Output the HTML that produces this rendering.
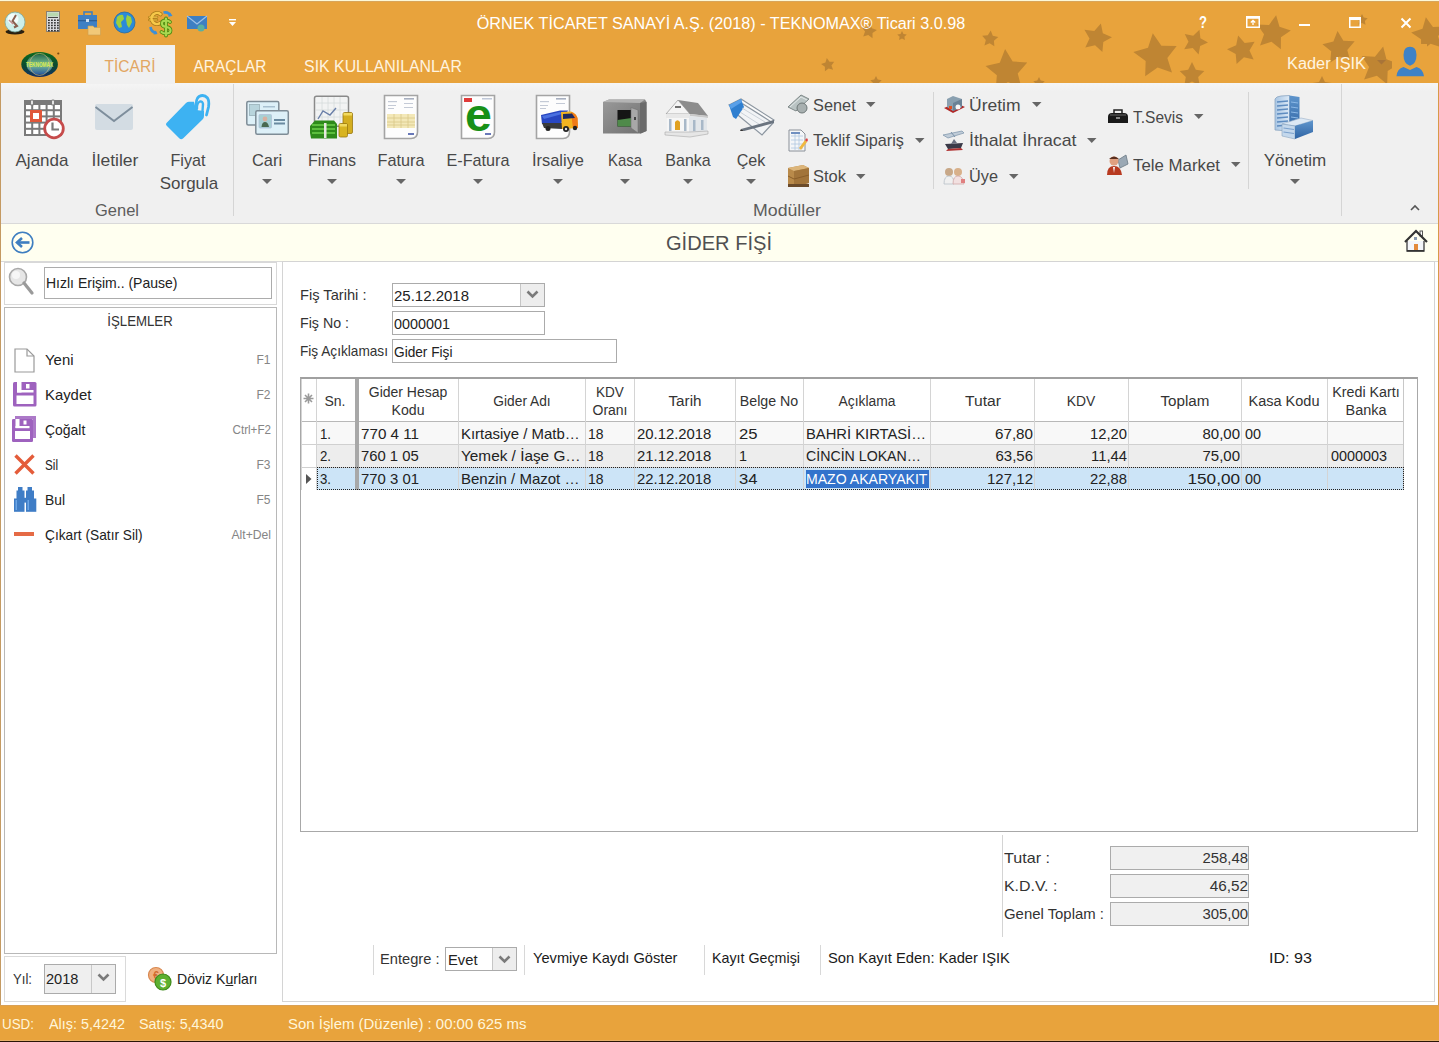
<!DOCTYPE html>
<html><head><meta charset="utf-8">
<style>
*{margin:0;padding:0;box-sizing:border-box}
html,body{width:1439px;height:1042px;overflow:hidden;background:#E8A33C;font-family:"Liberation Sans",sans-serif;position:relative}
.a{position:absolute}
.t{position:absolute;white-space:nowrap;line-height:1}
svg{overflow:visible}
</style></head><body>

<div class="a" style="left:0px;top:0px;width:1439px;height:83px;background:#E8A33C"></div>
<div class="a" style="left:0px;top:0px;width:1439px;height:1px;background:#FDF8D6"></div>
<div class="a" style="left:0px;top:1px;width:1439px;height:1px;background:#D8A55A"></div>
<svg class="a" style="left:0;top:0" width="1439" height="83" viewBox="0 0 1439 83"><polygon transform="translate(869,31) rotate(10) scale(8)" points="0.000,-1.000 0.294,-0.405 0.951,-0.309 0.476,0.155 0.588,0.809 0.000,0.500 -0.588,0.809 -0.476,0.155 -0.951,-0.309 -0.294,-0.405" fill="#BF8533"/><polygon transform="translate(902,36) rotate(0) scale(5)" points="0.000,-1.000 0.294,-0.405 0.951,-0.309 0.476,0.155 0.588,0.809 0.000,0.500 -0.588,0.809 -0.476,0.155 -0.951,-0.309 -0.294,-0.405" fill="#BF8533"/><polygon transform="translate(828,65) rotate(-10) scale(7)" points="0.000,-1.000 0.294,-0.405 0.951,-0.309 0.476,0.155 0.588,0.809 0.000,0.500 -0.588,0.809 -0.476,0.155 -0.951,-0.309 -0.294,-0.405" fill="#BF8533"/><polygon transform="translate(990,39) rotate(5) scale(8.5)" points="0.000,-1.000 0.294,-0.405 0.951,-0.309 0.476,0.155 0.588,0.809 0.000,0.500 -0.588,0.809 -0.476,0.155 -0.951,-0.309 -0.294,-0.405" fill="#BF8533"/><polygon transform="translate(1007,71) rotate(-5) scale(22)" points="0.000,-1.000 0.294,-0.405 0.951,-0.309 0.476,0.155 0.588,0.809 0.000,0.500 -0.588,0.809 -0.476,0.155 -0.951,-0.309 -0.294,-0.405" fill="#BF8533"/><polygon transform="translate(1097,38) rotate(15) scale(15)" points="0.000,-1.000 0.294,-0.405 0.951,-0.309 0.476,0.155 0.588,0.809 0.000,0.500 -0.588,0.809 -0.476,0.155 -0.951,-0.309 -0.294,-0.405" fill="#BF8533"/><polygon transform="translate(1156,56) rotate(-8) scale(23)" points="0.000,-1.000 0.294,-0.405 0.951,-0.309 0.476,0.155 0.588,0.809 0.000,0.500 -0.588,0.809 -0.476,0.155 -0.951,-0.309 -0.294,-0.405" fill="#BF8533"/><polygon transform="translate(1195,42) rotate(20) scale(13)" points="0.000,-1.000 0.294,-0.405 0.951,-0.309 0.476,0.155 0.588,0.809 0.000,0.500 -0.588,0.809 -0.476,0.155 -0.951,-0.309 -0.294,-0.405" fill="#BF8533"/><polygon transform="translate(1192,75) rotate(0) scale(13)" points="0.000,-1.000 0.294,-0.405 0.951,-0.309 0.476,0.155 0.588,0.809 0.000,0.500 -0.588,0.809 -0.476,0.155 -0.951,-0.309 -0.294,-0.405" fill="#BF8533"/><polygon transform="translate(876,82) rotate(0) scale(6)" points="0.000,-1.000 0.294,-0.405 0.951,-0.309 0.476,0.155 0.588,0.809 0.000,0.500 -0.588,0.809 -0.476,0.155 -0.951,-0.309 -0.294,-0.405" fill="#BF8533"/><polygon transform="translate(1039,83) rotate(0) scale(6)" points="0.000,-1.000 0.294,-0.405 0.951,-0.309 0.476,0.155 0.588,0.809 0.000,0.500 -0.588,0.809 -0.476,0.155 -0.951,-0.309 -0.294,-0.405" fill="#BF8533"/><polygon transform="translate(1242,50) rotate(-15) scale(15)" points="0.000,-1.000 0.294,-0.405 0.951,-0.309 0.476,0.155 0.588,0.809 0.000,0.500 -0.588,0.809 -0.476,0.155 -0.951,-0.309 -0.294,-0.405" fill="#BF8533"/><polygon transform="translate(1273,33) rotate(10) scale(18)" points="0.000,-1.000 0.294,-0.405 0.951,-0.309 0.476,0.155 0.588,0.809 0.000,0.500 -0.588,0.809 -0.476,0.155 -0.951,-0.309 -0.294,-0.405" fill="#BF8533"/><polygon transform="translate(1339,48) rotate(-5) scale(17)" points="0.000,-1.000 0.294,-0.405 0.951,-0.309 0.476,0.155 0.588,0.809 0.000,0.500 -0.588,0.809 -0.476,0.155 -0.951,-0.309 -0.294,-0.405" fill="#BF8533"/><polygon transform="translate(1362,20) rotate(0) scale(6)" points="0.000,-1.000 0.294,-0.405 0.951,-0.309 0.476,0.155 0.588,0.809 0.000,0.500 -0.588,0.809 -0.476,0.155 -0.951,-0.309 -0.294,-0.405" fill="#BF8533"/><polygon transform="translate(1379,66) rotate(12) scale(20)" points="0.000,-1.000 0.294,-0.405 0.951,-0.309 0.476,0.155 0.588,0.809 0.000,0.500 -0.588,0.809 -0.476,0.155 -0.951,-0.309 -0.294,-0.405" fill="#BF8533"/><polygon transform="translate(1429,35) rotate(-10) scale(18)" points="0.000,-1.000 0.294,-0.405 0.951,-0.309 0.476,0.155 0.588,0.809 0.000,0.500 -0.588,0.809 -0.476,0.155 -0.951,-0.309 -0.294,-0.405" fill="#BF8533"/><polygon transform="translate(1322,86) rotate(0) scale(10)" points="0.000,-1.000 0.294,-0.405 0.951,-0.309 0.476,0.155 0.588,0.809 0.000,0.500 -0.588,0.809 -0.476,0.155 -0.951,-0.309 -0.294,-0.405" fill="#BF8533"/></svg>
<svg class="a" style="left:3px;top:10px" width="24" height="25" viewBox="0 0 24 25">
<ellipse cx="12" cy="21.8" rx="9.5" ry="2.6" fill="#2a2010"/>
<circle cx="12" cy="12" r="10" fill="#CDEFEA" stroke="#7AA8A0" stroke-width="0.8"/>
<circle cx="10" cy="9" r="5.5" fill="#F2FCFA"/>
<path d="M13 5 L9.5 11 L14 16 L11 17.5" stroke="#8A6050" stroke-width="2" fill="none"/>
<path d="M6 10 L10 14" stroke="#C09090" stroke-width="1.5"/>
</svg>
<svg class="a" style="left:46px;top:11px" width="14" height="21" viewBox="0 0 14 21">
<rect x="0.5" y="0.5" width="13" height="20" fill="#DCDCE0" stroke="#8A8070" stroke-width="1"/>
<rect x="1.5" y="1.5" width="11" height="4" fill="#B8D8B0"/>
<rect x="2" y="6" width="10" height="1" fill="#444"/>
<rect x="2" y="8.5" width="1.8" height="1.5" fill="#333"/><rect x="2" y="11.1" width="1.8" height="1.5" fill="#333"/><rect x="2" y="13.7" width="1.8" height="1.5" fill="#333"/><rect x="2" y="16.3" width="1.8" height="1.5" fill="#333"/><rect x="2" y="18.9" width="1.8" height="1.5" fill="#333"/><rect x="5" y="8.5" width="1.8" height="1.5" fill="#333"/><rect x="5" y="11.1" width="1.8" height="1.5" fill="#333"/><rect x="5" y="13.7" width="1.8" height="1.5" fill="#333"/><rect x="5" y="16.3" width="1.8" height="1.5" fill="#333"/><rect x="5" y="18.9" width="1.8" height="1.5" fill="#333"/><rect x="8" y="8.5" width="1.8" height="1.5" fill="#333"/><rect x="8" y="11.1" width="1.8" height="1.5" fill="#333"/><rect x="8" y="13.7" width="1.8" height="1.5" fill="#333"/><rect x="8" y="16.3" width="1.8" height="1.5" fill="#333"/><rect x="8" y="18.9" width="1.8" height="1.5" fill="#333"/><rect x="11" y="8.5" width="1.8" height="1.5" fill="#333"/><rect x="11" y="11.1" width="1.8" height="1.5" fill="#333"/><rect x="11" y="13.7" width="1.8" height="1.5" fill="#333"/><rect x="11" y="16.3" width="1.8" height="1.5" fill="#333"/><rect x="11" y="18.9" width="1.8" height="1.5" fill="#333"/>
</svg>
<svg class="a" style="left:77px;top:11px" width="24" height="24" viewBox="0 0 24 24">
<rect x="7" y="1" width="8" height="4" fill="none" stroke="#3f7fbf" stroke-width="1.6"/>
<rect x="1" y="4" width="19" height="14" fill="#3f80c4"/>
<rect x="1" y="9" width="19" height="1.3" fill="#2d5f96"/>
<rect x="9" y="8" width="3" height="3" fill="#cfe0f0"/>
<path d="M11 15 h5 l1.5 1.5 h6 v7.5 h-12.5z" fill="#f1c878" stroke="#c9a050" stroke-width="0.6"/>
</svg>
<svg class="a" style="left:113px;top:11px" width="23" height="23" viewBox="0 0 23 23">
<circle cx="11.5" cy="11.5" r="10.5" fill="#2c8ad8" stroke="#1f6aa8" stroke-width="0.8"/>
<path d="M4 6 q3 -3 6 -2 l1 4 l-3 3 l1 5 l-3 1 l-3 -5z" fill="#9ccf3f"/>
<path d="M14 4 l4 2 l1 5 l-3 6 l-2 -3 l-1 -6z" fill="#9ccf3f"/>
</svg>
<svg class="a" style="left:148px;top:10px" width="26" height="25" viewBox="0 0 26 25">
<path d="M15.5 2.5 Q21 1.5 22.5 6" stroke="#3D8FD8" stroke-width="2.6" fill="none"/><path d="M20 6.5 L24.5 6 L22 2.5z" fill="#3D8FD8"/>
<path d="M2.5 17 Q3 22 8.5 23" stroke="#3D8FD8" stroke-width="2.6" fill="none"/><path d="M7.5 20.5 L9.5 24 L5.5 24.5z" fill="#3D8FD8"/>
<g fill="none" stroke-linecap="round">
<path d="M12.5 4.2 A5.5 5.5 0 1 0 12.5 12.8" stroke="#A87A18" stroke-width="4.2"/>
<path d="M1.5 7.2 H9 M1.5 10 H9" stroke="#A87A18" stroke-width="2.6"/>
<path d="M12.5 4.2 A5.5 5.5 0 1 0 12.5 12.8" stroke="#F6C84A" stroke-width="2.6"/>
<path d="M1.5 7.2 H9 M1.5 10 H9" stroke="#F6C84A" stroke-width="1.2"/>
<path d="M22 12 Q20.5 10.5 18 10.5 Q14 10.5 14 13.5 Q14 16.5 18 17 Q22.5 17.5 22.5 20.5 Q22.5 23.5 18 23.5 Q15 23.5 13.5 22 M18 8.5 V25.5" stroke="#4F8A10" stroke-width="3.8"/>
<path d="M22 12 Q20.5 10.5 18 10.5 Q14 10.5 14 13.5 Q14 16.5 18 17 Q22.5 17.5 22.5 20.5 Q22.5 23.5 18 23.5 Q15 23.5 13.5 22 M18 8.5 V25.5" stroke="#A8D850" stroke-width="2.2"/>
</g>
</svg>
<svg class="a" style="left:186px;top:15px" width="24" height="18" viewBox="0 0 24 18">
<rect x="1" y="1" width="20" height="13" fill="#3d7fc3"/>
<path d="M1 1 L11 9 L21 1" stroke="#9ec2e6" stroke-width="1.2" fill="none"/>
<circle cx="15" cy="13" r="3.5" fill="#5ab0a0"/>
</svg>
<svg class="a" style="left:228px;top:18px" width="9" height="10" viewBox="0 0 9 10"><rect x="1" y="1" width="7" height="1.4" fill="#fff"/><path d="M1 4 L8 4 L4.5 8z" fill="#fff"/></svg>
<div class="t" style="top:15.10px;font-size:16.3px;color:#FFFFFF;left:220.5px;width:1000px;text-align:center;transform-origin:500px 0;transform:scaleX(0.9943);">ÖRNEK TİCARET SANAYİ A.Ş. (2018) - TEKNOMAX® Ticari 3.0.98</div>
<div class="t" style="top:14.75px;font-size:16px;color:#fff;left:702.5px;width:1000px;text-align:center;transform-origin:500px 0;transform:scaleX(0.8185);font-weight:bold">?</div>
<svg class="a" style="left:1246px;top:16px" width="14" height="12" viewBox="0 0 14 12"><rect x="0.75" y="0.75" width="12.5" height="10.5" fill="none" stroke="#fff" stroke-width="1.5"/><rect x="0.75" y="0.75" width="12.5" height="2" fill="#fff"/><path d="M7 9 V4.5 M4.8 6.5 L7 4.3 L9.2 6.5" stroke="#fff" stroke-width="1.3" fill="none"/></svg>
<div class="a" style="left:1299px;top:24px;width:11px;height:2px;background:#fff"></div>
<svg class="a" style="left:1349px;top:17px" width="12" height="11" viewBox="0 0 12 11"><rect x="0.75" y="0.75" width="10.5" height="9.5" fill="none" stroke="#fff" stroke-width="1.5"/><rect x="0.75" y="0.75" width="10.5" height="2.3" fill="#fff"/></svg>
<svg class="a" style="left:1400px;top:17px" width="12" height="12" viewBox="0 0 12 12"><path d="M1.5 1.5 L10.5 10.5 M10.5 1.5 L1.5 10.5" stroke="#fff" stroke-width="2"/></svg>
<div class="a" style="left:86px;top:45px;width:89px;height:38px;background:#F0F0F0"></div>
<div class="t" style="top:59.35px;font-size:16.8px;color:#E2A662;left:-370px;width:1000px;text-align:center;transform-origin:500px 0;transform:scaleX(0.9261);">TİCARİ</div>
<div class="t" style="top:59.35px;font-size:16.8px;color:#FFF4E0;left:-270px;width:1000px;text-align:center;transform-origin:500px 0;transform:scaleX(0.9199);">ARAÇLAR</div>
<div class="t" style="top:59.35px;font-size:16.8px;color:#FFF4E0;left:-117.5px;width:1000px;text-align:center;transform-origin:500px 0;transform:scaleX(0.9453);">SIK KULLANILANLAR</div>
<svg class="a" style="left:19px;top:50px" width="42" height="30" viewBox="0 0 42 30">
<defs><linearGradient id="lg1" x1="0" y1="0" x2="0" y2="1"><stop offset="0" stop-color="#0E6A1E"/><stop offset="0.55" stop-color="#0A4A30"/><stop offset="1" stop-color="#14306A"/></linearGradient>
<linearGradient id="lg2" x1="0" y1="0" x2="0" y2="1"><stop offset="0" stop-color="#2A6A50"/><stop offset="0.5" stop-color="#7ABF90"/><stop offset="1" stop-color="#2A5AA0"/></linearGradient></defs>
<ellipse cx="20.6" cy="14.4" rx="18.3" ry="12.5" fill="url(#lg1)"/>
<ellipse cx="20.6" cy="14.4" rx="13" ry="10" fill="url(#lg2)"/>
<ellipse cx="20.6" cy="14.4" rx="10" ry="11" fill="none" stroke="#C8B880" stroke-width="0.7"/>
<text x="20.6" y="17.2" text-anchor="middle" font-family="Liberation Sans" font-weight="bold" font-size="7" fill="#D8E850" textLength="27" lengthAdjust="spacingAndGlyphs">TEKNOMAX</text>
<circle cx="39.3" cy="3.5" r="1.1" fill="#7A4A10"/>
</svg>
<div class="t" style="top:55.95px;font-size:15.6px;color:#FFF5E0;left:1287px;transform-origin:0 0;transform:scaleX(1.0471);">Kader IŞIK</div>
<svg class="a" style="left:1377px;top:60px" width="10" height="6" viewBox="0 0 10 6"><path d="M0 0 L9 0 L4.5 4.5z" fill="#A87438"/></svg>
<div class="a" style="left:1392px;top:44px;width:35px;height:37px;background:#E8A33C"></div>
<svg class="a" style="left:1394px;top:45px" width="33" height="33" viewBox="0 0 33 33">
<path d="M9.5 10 Q9.5 1.8 16 1.8 Q22.5 1.8 22.5 10 Q22.5 19 16 20.8 Q9.5 19 9.5 10z" fill="#3F82C6"/>
<path d="M2.5 31.2 Q3 24 9.5 22 L16 25 L22.5 22 Q29 24 30 31.2z" fill="#3F82C6"/>
</svg>
<div class="a" style="left:1px;top:83px;width:1437px;height:140px;background:#F0F0F0"></div>
<div class="a" style="left:1px;top:83px;width:1437px;height:9px;background:linear-gradient(#F5F5F5,#F0F0F0)"></div>
<div class="a" style="left:86px;top:83px;width:89px;height:1px;background:#F0F0F0"></div>
<div class="a" style="left:233px;top:84px;width:1px;height:132px;background:#D5D5D5"></div>
<div class="a" style="left:933px;top:92px;width:1px;height:97px;background:#D5D5D5"></div>
<div class="a" style="left:1248px;top:92px;width:1px;height:97px;background:#D5D5D5"></div>
<div class="a" style="left:1341px;top:84px;width:1px;height:132px;background:#D5D5D5"></div>
<div class="t" style="top:152.15px;font-size:16.2px;color:#484848;left:-458.0px;width:1000px;text-align:center;transform-origin:500px 0;transform:scaleX(1.0506);">Ajanda</div>
<div class="t" style="top:152.15px;font-size:16.2px;color:#484848;left:-385.4px;width:1000px;text-align:center;transform-origin:500px 0;transform:scaleX(1.0830);">İletiler</div>
<div class="t" style="top:152.15px;font-size:16.2px;color:#484848;left:-312.0px;width:1000px;text-align:center;transform-origin:500px 0;transform:scaleX(0.9970);">Fiyat</div>
<div class="t" style="top:152.15px;font-size:16.2px;color:#484848;left:-232.89999999999998px;width:1000px;text-align:center;transform-origin:500px 0;transform:scaleX(1.0167);">Cari</div>
<div class="t" style="top:152.15px;font-size:16.2px;color:#484848;left:-168.5px;width:1000px;text-align:center;transform-origin:500px 0;transform:scaleX(0.9871);">Finans</div>
<div class="t" style="top:152.15px;font-size:16.2px;color:#484848;left:-99.0px;width:1000px;text-align:center;transform-origin:500px 0;transform:scaleX(1.0038);">Fatura</div>
<div class="t" style="top:152.15px;font-size:16.2px;color:#484848;left:-22.0px;width:1000px;text-align:center;transform-origin:500px 0;transform:scaleX(0.9996);">E-Fatura</div>
<div class="t" style="top:152.15px;font-size:16.2px;color:#484848;left:57.5px;width:1000px;text-align:center;transform-origin:500px 0;transform:scaleX(1.0134);">İrsaliye</div>
<div class="t" style="top:152.15px;font-size:16.2px;color:#484848;left:124.5px;width:1000px;text-align:center;transform-origin:500px 0;transform:scaleX(0.9208);">Kasa</div>
<div class="t" style="top:152.15px;font-size:16.2px;color:#484848;left:187.75px;width:1000px;text-align:center;transform-origin:500px 0;transform:scaleX(0.9905);">Banka</div>
<div class="t" style="top:152.15px;font-size:16.2px;color:#484848;left:250.54999999999995px;width:1000px;text-align:center;transform-origin:500px 0;transform:scaleX(0.9962);">Çek</div>
<div class="t" style="top:152.15px;font-size:16.2px;color:#484848;left:795.1500000000001px;width:1000px;text-align:center;transform-origin:500px 0;transform:scaleX(1.0516);">Yönetim</div>
<div class="t" style="top:175.15px;font-size:16.2px;color:#484848;left:-311.25px;width:1000px;text-align:center;transform-origin:500px 0;transform:scaleX(1.0476);">Sorgula</div>
<div class="t" style="top:202.15px;font-size:16.2px;color:#5C5C5C;left:-383.5px;width:1000px;text-align:center;transform-origin:500px 0;transform:scaleX(1.0178);">Genel</div>
<div class="t" style="top:202.15px;font-size:16.2px;color:#5C5C5C;left:287.1px;width:1000px;text-align:center;transform-origin:500px 0;transform:scaleX(1.0945);">Modüller</div>
<svg class="a" style="left:262.0px;top:179px" width="10" height="5" viewBox="0 0 10 5"><path d="M0 0 L10 0 L5.0 5z" fill="#666666"/></svg>
<svg class="a" style="left:326.5px;top:179px" width="10" height="5" viewBox="0 0 10 5"><path d="M0 0 L10 0 L5.0 5z" fill="#666666"/></svg>
<svg class="a" style="left:396.0px;top:179px" width="10" height="5" viewBox="0 0 10 5"><path d="M0 0 L10 0 L5.0 5z" fill="#666666"/></svg>
<svg class="a" style="left:473.0px;top:179px" width="10" height="5" viewBox="0 0 10 5"><path d="M0 0 L10 0 L5.0 5z" fill="#666666"/></svg>
<svg class="a" style="left:552.5px;top:179px" width="10" height="5" viewBox="0 0 10 5"><path d="M0 0 L10 0 L5.0 5z" fill="#666666"/></svg>
<svg class="a" style="left:619.5px;top:179px" width="10" height="5" viewBox="0 0 10 5"><path d="M0 0 L10 0 L5.0 5z" fill="#666666"/></svg>
<svg class="a" style="left:683.0px;top:179px" width="10" height="5" viewBox="0 0 10 5"><path d="M0 0 L10 0 L5.0 5z" fill="#666666"/></svg>
<svg class="a" style="left:745.5px;top:179px" width="10" height="5" viewBox="0 0 10 5"><path d="M0 0 L10 0 L5.0 5z" fill="#666666"/></svg>
<svg class="a" style="left:1290.0px;top:179px" width="10" height="5" viewBox="0 0 10 5"><path d="M0 0 L10 0 L5.0 5z" fill="#666666"/></svg>
<div class="t" style="top:97.15px;font-size:16.2px;color:#484848;left:813px;transform-origin:0 0;transform:scaleX(1.0086);">Senet</div>
<svg class="a" style="left:866.25px;top:102.3px" width="9.5" height="5" viewBox="0 0 9.5 5"><path d="M0 0 L9.5 0 L4.75 5z" fill="#666666"/></svg>
<div class="t" style="top:132.15px;font-size:16.2px;color:#484848;left:813px;transform-origin:0 0;transform:scaleX(1.0008);">Teklif Sipariş</div>
<svg class="a" style="left:914.75px;top:137.8px" width="9.5" height="5" viewBox="0 0 9.5 5"><path d="M0 0 L9.5 0 L4.75 5z" fill="#666666"/></svg>
<div class="t" style="top:168.15px;font-size:16.2px;color:#484848;left:813px;transform-origin:0 0;transform:scaleX(1.0180);">Stok</div>
<svg class="a" style="left:856.25px;top:173.9px" width="9.5" height="5" viewBox="0 0 9.5 5"><path d="M0 0 L9.5 0 L4.75 5z" fill="#666666"/></svg>
<div class="t" style="top:97.15px;font-size:16.2px;color:#484848;left:969px;transform-origin:0 0;transform:scaleX(1.0818);">Üretim</div>
<svg class="a" style="left:1031.75px;top:102.3px" width="9.5" height="5" viewBox="0 0 9.5 5"><path d="M0 0 L9.5 0 L4.75 5z" fill="#666666"/></svg>
<div class="t" style="top:132.15px;font-size:16.2px;color:#484848;left:969px;transform-origin:0 0;transform:scaleX(1.0952);">İthalat İhracat</div>
<svg class="a" style="left:1086.75px;top:137.8px" width="9.5" height="5" viewBox="0 0 9.5 5"><path d="M0 0 L9.5 0 L4.75 5z" fill="#666666"/></svg>
<div class="t" style="top:168.15px;font-size:16.2px;color:#484848;left:969px;transform-origin:0 0;transform:scaleX(1.0066);">Üye</div>
<svg class="a" style="left:1008.75px;top:173.9px" width="9.5" height="5" viewBox="0 0 9.5 5"><path d="M0 0 L9.5 0 L4.75 5z" fill="#666666"/></svg>
<div class="t" style="top:109.15px;font-size:16.2px;color:#484848;left:1133px;transform-origin:0 0;transform:scaleX(0.9576);">T.Sevis</div>
<svg class="a" style="left:1194.25px;top:114.3px" width="9.5" height="5" viewBox="0 0 9.5 5"><path d="M0 0 L9.5 0 L4.75 5z" fill="#666666"/></svg>
<div class="t" style="top:157.15px;font-size:16.2px;color:#484848;left:1133px;transform-origin:0 0;transform:scaleX(1.0390);">Tele Market</div>
<svg class="a" style="left:1230.75px;top:162.1px" width="9.5" height="5" viewBox="0 0 9.5 5"><path d="M0 0 L9.5 0 L4.75 5z" fill="#666666"/></svg>
<svg class="a" style="left:1410px;top:205px" width="10" height="6" viewBox="0 0 10 6"><path d="M1 5 L5 1 L9 5" stroke="#555" stroke-width="1.6" fill="none"/></svg>
<svg class="a" style="left:23.5px;top:97px" width="44" height="44" viewBox="0 0 44 44">
<rect x="0" y="3" width="38" height="34" fill="#FFFFFF"/>
<rect x="0" y="3" width="38" height="5" fill="#7A7A7A"/>
<rect x="0.0" y="6" width="2" height="31" fill="#7A7A7A"/><rect x="7.2" y="6" width="2" height="31" fill="#7A7A7A"/><rect x="14.4" y="6" width="2" height="31" fill="#7A7A7A"/><rect x="21.6" y="6" width="2" height="31" fill="#7A7A7A"/><rect x="28.8" y="6" width="2" height="31" fill="#7A7A7A"/><rect x="36.0" y="6" width="2" height="31" fill="#7A7A7A"/><rect x="0" y="6.0" width="38" height="2" fill="#7A7A7A"/><rect x="0" y="12.2" width="38" height="2" fill="#7A7A7A"/><rect x="0" y="18.4" width="38" height="2" fill="#7A7A7A"/><rect x="0" y="24.6" width="38" height="2" fill="#7A7A7A"/><rect x="0" y="30.8" width="38" height="2" fill="#7A7A7A"/><rect x="0" y="37.0" width="38" height="2" fill="#7A7A7A"/>
<rect x="6.5" y="3" width="3" height="5" rx="1" fill="#F0F0F0" stroke="#7A7A7A" stroke-width="1.2"/>
<rect x="27.5" y="3" width="3" height="5" rx="1" fill="#F0F0F0" stroke="#7A7A7A" stroke-width="1.2"/>
<rect x="7.5" y="14.5" width="9" height="9" fill="#fff" stroke="#E0573A" stroke-width="3"/>
<circle cx="30" cy="31.5" r="9.3" fill="#fff" stroke="#C64B4B" stroke-width="2.8"/>
<path d="M28.5 25.5 V32.5 H35" stroke="#7A7A7A" stroke-width="2.2" fill="none"/>
</svg>
<svg class="a" style="left:95px;top:104px" width="39" height="27" viewBox="0 0 39 27">
<rect x="0" y="0" width="38" height="26" rx="2" fill="#D3DCE3"/>
<path d="M0.5 3 L19 17 L37.5 3" stroke="#7E8E9C" stroke-width="2" fill="none"/>
</svg>
<svg class="a" style="left:160px;top:90px" width="56" height="54" viewBox="0 0 56 54">
<path d="M6.5 33 L26 13 Q27.5 11.8 29 11.8 L34 11.8 L36 20 L44 21 L44 26 Q44 28 42.5 29.5 L23 48.5 Q21.2 50 19.5 48.5 L6.5 35.5 Q5.3 34.2 6.5 33z" fill="#3DB2F2"/>
<path d="M36.5 20 Q35 9 39 6.5 Q44 4 47.5 8 Q49.5 11 48.5 17 L46.5 25" stroke="#3DB2F2" stroke-width="2.8" fill="none" stroke-linecap="round"/>
<path d="M37 19 Q36.5 13 40 11.5 Q42.5 11 43 14 L42.5 21" stroke="#3DB2F2" stroke-width="2.4" fill="none"/>
</svg>
<svg class="a" style="left:245px;top:100px" width="46" height="37" viewBox="0 0 46 37">
<rect x="1.8" y="1.5" width="32" height="23.5" rx="1.5" fill="#DDF0F8" stroke="#7E8C96" stroke-width="1.5"/>
<rect x="4.5" y="4.5" width="10" height="11" fill="#B8D4DC" stroke="#98B0B8" stroke-width="0.8"/>
<rect x="18" y="6" width="12" height="1.5" fill="#A8C0D0"/>
<rect x="10.8" y="10.8" width="32.5" height="23.5" rx="1.5" fill="#DDF0F8" stroke="#7E8C96" stroke-width="1.5"/>
<rect x="14" y="14.5" width="12.5" height="13.5" rx="1" fill="#A8D0D4" stroke="#B0C0D8" stroke-width="0.8"/>
<circle cx="20" cy="19" r="2.4" fill="#D8B0A0"/>
<path d="M16.5 27 Q17 22 20 22 Q23 22 24 27z" fill="#4A6A50"/>
<rect x="29" y="19" width="11" height="2" fill="#6A8AA0"/><rect x="29" y="22.5" width="11" height="2" fill="#6A8AA0"/>
</svg>
<svg class="a" style="left:308px;top:95px" width="47" height="45" viewBox="0 0 47 45">
<rect x="6.5" y="1.2" width="34" height="30" rx="2" fill="#F2F3F3" stroke="#8A8A8A" stroke-width="1.5"/>
<g stroke="#D6DADA" stroke-width="0.8"><path d="M8 8H40M8 15H40M8 22H40M14 2V31M20 2V31M26 2V31M32 2V31"/></g>
<path d="M10 24 L15 16 L22 20 L28 13" stroke="#6A7FA8" stroke-width="1.4" fill="none"/>
<path d="M2 31 L7 25.5 L26 25.5 L29 29 L29 43.5 L3 43.5 L2 38z" fill="#2E8A1A"/>
<path d="M4 30 H27 M4 34 H27 M4 38 H27" stroke="#6CD04A" stroke-width="1.4"/>
<rect x="16" y="28" width="2.5" height="15" fill="#E8E8E0"/>
<rect x="35" y="17.5" width="9.5" height="21" rx="1.5" fill="#D4AE20" stroke="#9A7A10" stroke-width="0.8"/>
<rect x="35.5" y="18" width="8.5" height="2.5" fill="#F2DA60"/>
<rect x="31" y="28.5" width="8.5" height="13.5" rx="1.5" fill="#D8B420" stroke="#9A7A10" stroke-width="0.8"/>
<rect x="31.5" y="29" width="7.5" height="2.5" fill="#F2DA60"/>
</svg>
<svg class="a" style="left:383px;top:94px" width="37" height="46" viewBox="0 0 37 46">
<path d="M1.5 1.5 H34.5 V38 Q34.5 44.5 28 44.5 H1.5z" fill="#fdfdfd" stroke="#A4A4A4" stroke-width="1.6"/>
<g fill="#c4cad6"><rect x="5" y="7" width="9" height="1.2"/><rect x="21" y="4" width="10" height="1.6" fill="#a8b0c0"/><rect x="5" y="11" width="8" height="1"/><rect x="21" y="9" width="9" height="1"/><rect x="21" y="13" width="9" height="1"/><rect x="5" y="14" width="6" height="1"/></g>
<rect x="4" y="20" width="28" height="14" fill="#F3E8B8"/>
<g stroke="#D8C888" stroke-width="0.8"><path d="M4 24H32M4 28H32M4 31H32M11 20V34M18 20V34M25 20V34"/></g>
<rect x="25" y="39" width="6" height="2" fill="#6878b8"/>
</svg>
<svg class="a" style="left:460px;top:94px" width="37" height="46" viewBox="0 0 37 46">
<path d="M1.5 1.5 H34.5 V38 Q34.5 44.5 28 44.5 H1.5z" fill="#fdfdfd" stroke="#A4A4A4" stroke-width="1.6"/>
<rect x="4" y="4" width="8" height="4" fill="#e03a3a"/>
<text x="18.5" y="37" text-anchor="middle" font-family="Liberation Sans" font-weight="bold" font-size="46" fill="#179017" transform="translate(18.5 0) scale(1.05 1) translate(-18.5 0)">e</text><rect x="22" y="4" width="10" height="1.5" fill="#c0c8d8"/>
<rect x="25" y="39" width="6" height="2" fill="#6878b8"/>
</svg>
<svg class="a" style="left:535px;top:94px" width="46" height="46" viewBox="0 0 46 46">
<path d="M1.5 1.5 H34.5 V38 Q34.5 44.5 28 44.5 H1.5z" fill="#fdfdfd" stroke="#A4A4A4" stroke-width="1.6"/>
<g fill="#c4cad6"><rect x="5" y="7" width="9" height="1.2"/><rect x="21" y="4" width="10" height="1.6" fill="#a8b0c0"/><rect x="5" y="11" width="8" height="1"/><rect x="21" y="9" width="9" height="1"/><rect x="5" y="14" width="6" height="1"/></g>
<path d="M6 21 L25 16.5 L33 16.5 L26 30 L7 30z" fill="#2846C0"/>
<path d="M7 22 L25 18 L27 20 L9 25z" fill="#4A70E0"/>
<path d="M7 29 L27 29 L27 35 L9 34z" fill="#3A3A3A"/>
<path d="M26 18 L36 17.5 Q41 19 42.5 24 L43 34 L27 35z" fill="#F2B420"/>
<path d="M36 18 Q41 19.5 42.5 24 L43 34 L38 34.5z" fill="#F07A18"/>
<path d="M28 20 L37 19.5 L40 24 L28 25z" fill="#1E2A60"/>
<circle cx="13" cy="34.5" r="2.5" fill="#222"/><circle cx="31" cy="35" r="3" fill="#222"/><circle cx="31" cy="35" r="1.2" fill="#ddd"/><circle cx="40" cy="34" r="2.2" fill="#222"/>
</svg>
<svg class="a" style="left:601px;top:98px" width="48" height="38" viewBox="0 0 48 38">
<defs><linearGradient id="kg" x1="0" y1="0" x2="1" y2="1"><stop offset="0" stop-color="#9A9A9A"/><stop offset="1" stop-color="#6E6E6E"/></linearGradient></defs>
<path d="M2 4 L8 1.5 L44 1.5 L45.5 4 L45.5 33 L40 35.5 L2 35.5z" fill="url(#kg)"/>
<path d="M2 4 L8 1.5 L44 1.5 L39 5z" fill="#B4B4B4"/>
<path d="M39 5 L45.5 4 L45.5 33 L39 35.5z" fill="#6A6A6A"/>
<rect x="16.5" y="12" width="14" height="16.5" fill="#151515"/>
<path d="M16.5 22 L30.5 20 L30.5 28.5 L16.5 28.5z" fill="#4F8A4A"/>
<path d="M30 9.5 L37 12 L37 35 L30 30z" fill="#A8A8A8" stroke="#707070" stroke-width="0.6"/>
<rect x="33" y="19" width="2" height="3" fill="#444"/>
</svg>
<svg class="a" style="left:664px;top:98px" width="46" height="41" viewBox="0 0 46 41">
<path d="M2 16 L14 2 L26 16z" fill="#F4F4F4" stroke="#A0A0A0" stroke-width="0.8"/>
<path d="M14 2 L34 5 L44 18 L26 16z" fill="#8C8C8C"/>
<path d="M26 16 L44 18 L44 20 L26 18z" fill="#C8C8C8"/>
<rect x="2" y="16" width="24" height="4" fill="#E8E8E8"/>
<path d="M3 20 H25 V34 H3z" fill="#F6F6F6"/>
<path d="M25 18 L43 20 L43 34 L25 36z" fill="#E2E6EA"/>
<g fill="#A8B8C8"><rect x="5" y="21" width="2.5" height="12"/><rect x="20" y="21" width="2.5" height="12"/><rect x="29" y="22" width="2.5" height="11"/><rect x="37" y="22" width="2.5" height="10"/></g>
<path d="M11 32 V24 Q13.5 20.5 16 24 V32z" fill="#E0A020"/>
<path d="M1 34 L26 34 L44 33 L44 36 L26 39 L1 37z" fill="#E6E6E6" stroke="#A8A8A8" stroke-width="0.6"/>
<rect x="11" y="8" width="6" height="2" fill="#707070"/>
</svg>
<svg class="a" style="left:727px;top:97px" width="49" height="41" viewBox="0 0 49 41">
<path d="M2 8 L14 2 L47 23 L34 35z" fill="#FAFAFA" stroke="#8C96A0" stroke-width="1.2"/>
<path d="M6 14 L16 7 L46 26 L35 38z" fill="#F2F4F6" stroke="#8C96A0" stroke-width="1.2"/>
<path d="M2 8 L14 2 L17 10 L9 22 L6 20z" fill="#2F7FD0"/>
<path d="M2 8 L14 2 L15 5 L4 12z" fill="#5AA0E8"/>
<g stroke="#C0C8D0" stroke-width="0.8"><path d="M15 11 L38 25 M13 15 L35 29"/></g>
<path d="M14 32 L47 23 L47 26 L17 34z" fill="#6A7480"/>
<path d="M14 32 L17 34 L13 34z" fill="#333"/>
</svg>
<svg class="a" style="left:1273px;top:94px" width="44" height="47" viewBox="0 0 44 47">
<defs><linearGradient id="yg1" x1="0" y1="0" x2="1" y2="0"><stop offset="0" stop-color="#A9C6E4"/><stop offset="1" stop-color="#DCE9F6"/></linearGradient>
<linearGradient id="yg2" x1="0" y1="0" x2="0" y2="1"><stop offset="0" stop-color="#5F95CC"/><stop offset="1" stop-color="#2F64A4"/></linearGradient></defs>
<path d="M2 5 Q3 2.5 8 2 L16.5 1.5 L16.5 37 L2 36z" fill="url(#yg1)" stroke="#8AA4C0" stroke-width="0.8"/>
<path d="M16.5 1.5 L26.5 3 L26.5 31 L16.5 37z" fill="url(#yg2)"/>
<g stroke="#5E8CC0" stroke-width="1.6"><path d="M4 8 L15 7 M4 12 L15 11 M4 16 L15 15 M4 20 L15 19 M4 24 L15 23 M4 28 L15 27 M4 32 L15 31"/></g>
<g stroke="#8CB8E6" stroke-width="1"><path d="M18 8 L25 9 M18 13 L25 14 M18 18 L25 19 M18 23 L25 24"/></g>
<path d="M9 30 L28 24 L40 26.5 L22 32z" fill="#DCE8F4" stroke="#9AB0C8" stroke-width="0.6"/>
<path d="M9 30 L22 32 L22 45 L9 42z" fill="#C4D8EC" stroke="#8AA4C0" stroke-width="0.6"/>
<path d="M22 32 L40 26.5 L40 38 L22 45z" fill="url(#yg2)"/>
<g stroke="#7AA0CC" stroke-width="1.2"><path d="M10.5 34 L21 35.5 M10.5 38 L21 39.5"/></g>
</svg>
<svg class="a" style="left:787px;top:94px" width="23" height="20" viewBox="0 0 23 20">
<path d="M1 13 L14 1 L22 5 L9 17z" fill="#b9c3c3" stroke="#7e8888" stroke-width="1"/>
<path d="M3 13 L14 3 L20 6" stroke="#e4eaea" stroke-width="1" fill="none"/>
<circle cx="15" cy="14" r="5" fill="#a8b0b0" stroke="#6e7777" stroke-width="1"/>
</svg>
<svg class="a" style="left:788px;top:129px" width="20" height="23" viewBox="0 0 20 23">
<path d="M1 1 H13 L17 5 V22 H1z" fill="#f4f6f8" stroke="#8a9098" stroke-width="1"/>
<g stroke="#b0c8e0" stroke-width="0.8"><path d="M3 7H15M3 11H15M3 15H15M3 19H15M7 4V21M11 4V21"/></g>
<rect x="3" y="3" width="9" height="2" fill="#6f8fc0"/>
<path d="M11 19 L17 11 L19 13 L13 21z" fill="#f0b840"/>
<path d="M17 11 L19 9 L20 11 L19 13z" fill="#e04040"/>
</svg>
<svg class="a" style="left:786px;top:164px" width="25" height="24" viewBox="0 0 25 24">
<path d="M2 4 L17 1 L23 4 L23 19 L8 23 L2 20z" fill="#b98a4a"/>
<path d="M2 4 L17 1 L23 4 L8 7z" fill="#dcb57a"/>
<path d="M8 7 L23 4 L23 19 L8 23z" fill="#a2743a"/>
<path d="M2 12 L8 15 L23 11" stroke="#8a5e2a" stroke-width="1" fill="none"/>
<rect x="2" y="20" width="21" height="3" fill="#6a4a2a"/>
</svg>
<svg class="a" style="left:943px;top:94px" width="23" height="21" viewBox="0 0 23 21">
<path d="M1 14 L10 19 L22 13 L13 9z" fill="#b02828"/>
<path d="M4 13 L4 5 L10 2 L19 5 L19 13 L10 17z" fill="#8aa0b0"/>
<path d="M10 9 L19 5 L19 13 L10 17z" fill="#6b8296"/>
<circle cx="15" cy="13" r="2.5" fill="#f8f8f8"/>
<rect x="6" y="12" width="3" height="3" fill="#e05020"/>
</svg>
<svg class="a" style="left:942px;top:129px" width="23" height="22" viewBox="0 0 23 22">
<path d="M1 6 L20 2 L22 4 L6 9z" fill="#c0ccd8" stroke="#7890a8" stroke-width="0.7"/>
<path d="M9 3 L13 8" stroke="#7890a8" stroke-width="1"/>
<path d="M3 15 L21 14 L19 19 L6 20z" fill="#3a3a48"/>
<path d="M6 20 L19 19 L21 21 L4 22z" fill="#b03030"/>
<path d="M9 15 L12 10 L15 14z" fill="#6a7080"/>
</svg>
<svg class="a" style="left:943px;top:167px" width="23" height="18" viewBox="0 0 23 18">
<circle cx="6" cy="5" r="4" fill="#c8a888"/><path d="M1 17 Q1 9 6 9 Q11 9 11 17z" fill="#f0f0f0" stroke="#b8c0c8" stroke-width="0.8"/>
<circle cx="15" cy="5" r="4" fill="#d8b08a"/><path d="M10 17 Q10 9 15 9 Q20 9 21 17z" fill="#f2e0e0" stroke="#d0a8a8" stroke-width="0.8"/>
<rect x="18" y="12" width="4" height="4" fill="#e08080"/>
</svg>
<svg class="a" style="left:1107px;top:108px" width="23" height="17" viewBox="0 0 23 17">
<path d="M7 5 V2 H15 V5" stroke="#222" stroke-width="1.5" fill="none"/>
<path d="M1 9 Q1 5 5 5 H17 Q21 5 21 9 V15 H1z" fill="#1a1a1a"/>
<path d="M3 7 H19" stroke="#666" stroke-width="1"/>
<rect x="9" y="9" width="4" height="2" fill="#888"/>
</svg>
<svg class="a" style="left:1106px;top:154px" width="23" height="22" viewBox="0 0 23 22">
<path d="M12 6 L20 1 L22 10 L14 14z" fill="#9aa8b4" stroke="#6a7884" stroke-width="0.8"/>
<circle cx="8" cy="7" r="4.5" fill="#e0a080"/>
<path d="M3 5 Q8 0 13 5" fill="#5a3020"/>
<path d="M1 21 Q1 12 8 12 Q15 12 16 21z" fill="#b83a20"/>
<path d="M7 13 L8 19 L9 13z" fill="#f8f8f8"/>
</svg>
<div class="a" style="left:1px;top:223px;width:1437px;height:782px;background:#FFFFFF"></div>
<div class="a" style="left:0px;top:83px;width:1px;height:922px;background:#C49A62"></div>
<div class="a" style="left:1438px;top:83px;width:1px;height:922px;background:#D89A48"></div>
<div class="a" style="left:1px;top:223px;width:1437px;height:39px;background:#FFFFF0;border-top:1px solid #D9D9D9;border-bottom:1px solid #D9D9D9"></div>
<div class="t" style="top:232.50px;font-size:20.5px;color:#505050;left:219.20000000000005px;width:1000px;text-align:center;transform-origin:500px 0;transform:scaleX(0.9796);">GİDER FİŞİ</div>
<svg class="a" style="left:10px;top:229.5px" width="25" height="25" viewBox="0 0 25 25">
<circle cx="12.5" cy="12.5" r="10.3" fill="none" stroke="#3E7EC0" stroke-width="1.6"/>
<path d="M8 12.5 H19.5" stroke="#3E7EC0" stroke-width="2.6"/>
<path d="M12 8 L7 12.5 L12 17" stroke="#3E7EC0" stroke-width="2.6" fill="none"/>
</svg>
<svg class="a" style="left:1404px;top:229px" width="24" height="24" viewBox="0 0 24 24">
<path d="M3 12 V22 H20 V12" fill="#f4f6fa" stroke="#555" stroke-width="1.5"/>
<rect x="10" y="15" width="4" height="7" fill="#E38A3A"/>
<rect x="10" y="8" width="3" height="3" fill="#8a9ab0"/>
<rect x="16" y="2" width="2.5" height="5" fill="#fff" stroke="#555" stroke-width="1"/>
<path d="M1 13 L12 2 L23 13" stroke="#333" stroke-width="2.2" fill="none"/>
<rect x="3" y="21" width="17" height="1.6" fill="#333"/>
</svg>
<div class="a" style="left:4px;top:262px;width:273px;height:43px;border:1px solid #D8D8D8;background:#fff"></div>
<svg class="a" style="left:7px;top:266px" width="28" height="32" viewBox="0 0 28 32">
<circle cx="11" cy="11" r="8.5" fill="#e6e6e6" stroke="#a8a8a8" stroke-width="1.6"/>
<circle cx="9" cy="9" r="4" fill="#f6f6f6"/>
<path d="M17 17 L25 27" stroke="#9a9a9a" stroke-width="3.2" stroke-linecap="round"/>
</svg>
<div class="a" style="left:44px;top:267px;width:228px;height:32px;border:1px solid #ACACAC;background:#fff"></div>
<div class="t" style="top:275.85px;font-size:14.8px;color:#222;left:46px;transform-origin:0 0;transform:scaleX(0.9462);">Hızlı Erişim.. (Pause)</div>
<div class="a" style="left:4px;top:307px;width:273px;height:647px;border:1px solid #B8B8B8;background:#fff"></div>
<div class="t" style="top:314.10px;font-size:14.3px;color:#333;left:-359.8px;width:1000px;text-align:center;transform-origin:500px 0;transform:scaleX(0.9260);">İŞLEMLER</div>
<div class="t" style="top:352.85px;font-size:14.8px;color:#222;left:45.3px;transform-origin:0 0;transform:scaleX(1.0083);">Yeni</div>
<div class="t" style="top:354.25px;font-size:12px;color:#858585;left:-729.5px;width:1000px;text-align:right;transform-origin:1000px 0;">F1</div>
<div class="t" style="top:387.85px;font-size:14.8px;color:#222;left:45.3px;transform-origin:0 0;transform:scaleX(1.0048);">Kaydet</div>
<div class="t" style="top:389.25px;font-size:12px;color:#858585;left:-729.5px;width:1000px;text-align:right;transform-origin:1000px 0;">F2</div>
<div class="t" style="top:422.85px;font-size:14.8px;color:#222;left:45.3px;transform-origin:0 0;transform:scaleX(0.9420);">Çoğalt</div>
<div class="t" style="top:424.25px;font-size:12px;color:#858585;left:-729.5px;width:1000px;text-align:right;transform-origin:1000px 0;transform:scaleX(0.9704);">Ctrl+F2</div>
<div class="t" style="top:457.85px;font-size:14.8px;color:#222;left:45.3px;transform-origin:0 0;transform:scaleX(0.7903);">Sil</div>
<div class="t" style="top:459.25px;font-size:12px;color:#858585;left:-729.5px;width:1000px;text-align:right;transform-origin:1000px 0;">F3</div>
<div class="t" style="top:492.85px;font-size:14.8px;color:#222;left:45.3px;transform-origin:0 0;transform:scaleX(0.9349);">Bul</div>
<div class="t" style="top:494.25px;font-size:12px;color:#858585;left:-729.5px;width:1000px;text-align:right;transform-origin:1000px 0;">F5</div>
<div class="t" style="top:527.85px;font-size:14.8px;color:#222;left:45.3px;transform-origin:0 0;transform:scaleX(0.9282);">Çıkart (Satır Sil)</div>
<div class="t" style="top:529.25px;font-size:12px;color:#858585;left:-729.5px;width:1000px;text-align:right;transform-origin:1000px 0;transform:scaleX(1.0123);">Alt+Del</div>
<svg class="a" style="left:14px;top:348px" width="21" height="25" viewBox="0 0 21 25"><path d="M1 1 H13 L20 8 V24 H1z" fill="#fff" stroke="#9a9a9a" stroke-width="1.2"/><path d="M13 1 V8 H20" fill="none" stroke="#9a9a9a" stroke-width="1.2"/></svg>
<svg class="a" style="left:12.5px;top:382px" width="24" height="25" viewBox="0 0 24 25"><rect x="0" y="0" width="23.5" height="24.5" rx="1.5" fill="#9E62BE"/><rect x="4" y="0" width="4.5" height="10.5" fill="#fff"/><rect x="4" y="8" width="16.5" height="2.5" fill="#fff"/><rect x="13" y="2" width="3.5" height="4.5" fill="#fff"/><rect x="3.5" y="13.5" width="17" height="8.5" fill="#fff"/></svg>
<svg class="a" style="left:12px;top:416px" width="25" height="26" viewBox="0 0 25 26"><path d="M3 0 H24 V22 H21 V3 H3z" fill="#9E62BE" opacity="0.85"/><rect x="0" y="3" width="21" height="23" rx="1.2" fill="#9E62BE"/><rect x="3.5" y="3" width="4" height="9" fill="#fff"/><rect x="3.5" y="10" width="14" height="2.2" fill="#fff"/><rect x="11.5" y="4.5" width="3" height="4" fill="#fff"/><rect x="3" y="15" width="15" height="8" fill="#fff"/></svg>
<svg class="a" style="left:14px;top:454px" width="21" height="21" viewBox="0 0 21 21"><path d="M1.5 1.5 L19.5 19.5 M19.5 1.5 L1.5 19.5" stroke="#E45C3A" stroke-width="3.4"/></svg>
<svg class="a" style="left:13.5px;top:487px" width="23" height="25" viewBox="0 0 23 25">
<g fill="#3F7DC6"><rect x="4" y="0" width="4.5" height="4"/><rect x="2.5" y="3.5" width="8" height="8.5"/><rect x="0" y="11.5" width="10.5" height="13.3"/>
<rect x="13.5" y="0" width="4.5" height="4"/><rect x="12" y="3.5" width="8" height="8.5"/><rect x="12" y="11.5" width="10.3" height="13.3"/>
<rect x="10" y="10.8" width="2.5" height="4.8"/></g>
<g fill="#6CA6E6"><rect x="1.5" y="13" width="1.5" height="10"/><rect x="13.5" y="13" width="1.5" height="10"/></g>
</svg>
<div class="a" style="left:13.5px;top:531.5px;width:20.5px;height:4px;background:#E56A45"></div>
<div class="a" style="left:4px;top:956px;width:122px;height:46px;border:1px solid #DADADA;background:#fff"></div>
<div class="t" style="top:971.95px;font-size:14.6px;color:#333;left:13px;transform-origin:0 0;transform:scaleX(0.9007);">Yıl:</div>
<div class="a" style="left:44px;top:964px;width:72px;height:30px;border:1px solid #ABABAB;background:#EFEFEF"></div>
<div class="a" style="left:91px;top:965px;width:1px;height:28px;background:#C8C8C8"></div>
<div class="t" style="top:971.95px;font-size:14.6px;color:#222;left:46.3px;transform-origin:0 0;transform:scaleX(1.0006);">2018</div>
<svg class="a" style="left:97px;top:973px" width="13" height="9" viewBox="0 0 13 9"><path d="M1.5 1.5 L6.5 6.5 L11.5 1.5" stroke="#7A7A7A" stroke-width="2.6" fill="none"/></svg>
<svg class="a" style="left:147px;top:966px" width="26" height="25" viewBox="0 0 26 25">
<circle cx="9" cy="9" r="7.5" fill="#F0B080" stroke="#D88850" stroke-width="1.2"/>
<text x="9" y="13" text-anchor="middle" font-family="Liberation Sans" font-weight="bold" font-size="10" fill="#D06A30">€</text>
<circle cx="16" cy="16" r="8" fill="#5DB030" stroke="#3E8A1A" stroke-width="1.2"/>
<text x="16" y="20.5" text-anchor="middle" font-family="Liberation Sans" font-weight="bold" font-size="11" fill="#fff">$</text>
</svg>
<div class="t" style="top:971.95px;font-size:14.6px;color:#222;left:177px;transform-origin:0 0;transform:scaleX(0.9633);">Döviz K<u>u</u>rları</div>
<div class="a" style="left:282px;top:261px;width:1153px;height:741px;border:1px solid #D4D4D4;background:#fff"></div>
<div class="t" style="top:287.95px;font-size:14.6px;color:#333;left:299.5px;transform-origin:0 0;transform:scaleX(1.0037);">Fiş Tarihi :</div>
<div class="t" style="top:315.95px;font-size:14.6px;color:#333;left:299.5px;transform-origin:0 0;transform:scaleX(0.9743);">Fiş No :</div>
<div class="t" style="top:343.95px;font-size:14.6px;color:#333;left:299.5px;transform-origin:0 0;transform:scaleX(0.9351);">Fiş Açıklaması</div>
<div class="a" style="left:392px;top:283px;width:153px;height:24px;border:1px solid #ABABAB;background:#fff"></div>
<div class="a" style="left:520px;top:284px;width:24px;height:22px;background:#EDEDED;border-left:1px solid #C6C6C6"></div>
<svg class="a" style="left:526px;top:290px" width="13" height="9" viewBox="0 0 13 9"><path d="M1.5 1.5 L6.5 6.5 L11.5 1.5" stroke="#7A7A7A" stroke-width="2.6" fill="none"/></svg>
<div class="t" style="top:288.95px;font-size:14.6px;color:#222;left:393.5px;transform-origin:0 0;transform:scaleX(1.0264);">25.12.2018</div>
<div class="a" style="left:392px;top:311px;width:153px;height:24px;border:1px solid #ABABAB;background:#fff"></div>
<div class="t" style="top:316.95px;font-size:14.6px;color:#222;left:393.5px;transform-origin:0 0;transform:scaleX(0.9852);">0000001</div>
<div class="a" style="left:392px;top:339px;width:225px;height:24px;border:1px solid #ABABAB;background:#fff"></div>
<div class="t" style="top:344.95px;font-size:14.6px;color:#222;left:393.5px;transform-origin:0 0;transform:scaleX(0.9365);">Gider Fişi</div>
<div class="a" style="left:300px;top:377px;width:1118px;height:455px;border:1px solid #A8A8A8;border-top:2px solid #A0A0A0;background:#fff"></div>
<div class="a" style="left:317px;top:421px;width:1086px;height:23px;background:#F8F8F8"></div>
<div class="a" style="left:317px;top:444px;width:1086px;height:23px;background:#EDEDED"></div>
<div class="a" style="left:317px;top:467px;width:1086px;height:23px;background:#CCE4F7"></div>
<div class="a" style="left:301px;top:421px;width:1102px;height:1px;background:#D0D0D0"></div>
<div class="a" style="left:301px;top:444px;width:1102px;height:1px;background:#D0D0D0"></div>
<div class="a" style="left:301px;top:467px;width:1102px;height:1px;background:#D0D0D0"></div>
<div class="a" style="left:301px;top:421px;width:1102px;height:1px;background:#B8B8B8"></div>
<div class="a" style="left:316px;top:379px;width:1px;height:111px;background:#D4D4D4"></div>
<div class="a" style="left:358px;top:379px;width:1px;height:111px;background:#D4D4D4"></div>
<div class="a" style="left:458px;top:379px;width:1px;height:111px;background:#D4D4D4"></div>
<div class="a" style="left:585px;top:379px;width:1px;height:111px;background:#D4D4D4"></div>
<div class="a" style="left:634px;top:379px;width:1px;height:111px;background:#D4D4D4"></div>
<div class="a" style="left:735px;top:379px;width:1px;height:111px;background:#D4D4D4"></div>
<div class="a" style="left:803px;top:379px;width:1px;height:111px;background:#D4D4D4"></div>
<div class="a" style="left:930px;top:379px;width:1px;height:111px;background:#D4D4D4"></div>
<div class="a" style="left:1034px;top:379px;width:1px;height:111px;background:#D4D4D4"></div>
<div class="a" style="left:1128px;top:379px;width:1px;height:111px;background:#D4D4D4"></div>
<div class="a" style="left:1241px;top:379px;width:1px;height:111px;background:#D4D4D4"></div>
<div class="a" style="left:1327px;top:379px;width:1px;height:111px;background:#D4D4D4"></div>
<div class="a" style="left:1403px;top:379px;width:1px;height:111px;background:#D4D4D4"></div>
<div class="a" style="left:301px;top:379px;width:1px;height:111px;background:#D4D4D4"></div>
<div class="a" style="left:355px;top:379px;width:3.5px;height:111px;background:#A8A8A8"></div>
<div class="a" style="left:1403px;top:379px;width:1px;height:111px;background:#C8C8C8"></div>
<div class="a" style="left:317px;top:467px;width:1087px;height:23px;border:1px dotted #222"></div>
<div class="a" style="left:806px;top:470px;width:123px;height:18px;background:#3373CC"></div>
<div class="t" style="top:394.25px;font-size:14px;color:#333;left:-165px;width:1000px;text-align:center;transform-origin:500px 0;transform:scaleX(0.9993);">Sn.</div>
<div class="t" style="top:385.25px;font-size:14px;color:#333;left:-91.69999999999999px;width:1000px;text-align:center;transform-origin:500px 0;transform:scaleX(0.9988);">Gider Hesap</div>
<div class="t" style="top:403.25px;font-size:14px;color:#333;left:-91.69999999999999px;width:1000px;text-align:center;transform-origin:500px 0;transform:scaleX(1.0092);">Kodu</div>
<div class="t" style="top:394.25px;font-size:14px;color:#333;left:21.899999999999977px;width:1000px;text-align:center;transform-origin:500px 0;transform:scaleX(0.9817);">Gider Adı</div>
<div class="t" style="top:385.25px;font-size:14px;color:#333;left:109.79999999999995px;width:1000px;text-align:center;transform-origin:500px 0;transform:scaleX(0.9657);">KDV</div>
<div class="t" style="top:403.25px;font-size:14px;color:#333;left:109.79999999999995px;width:1000px;text-align:center;transform-origin:500px 0;transform:scaleX(0.9996);">Oranı</div>
<div class="t" style="top:394.25px;font-size:14px;color:#333;left:184.5px;width:1000px;text-align:center;transform-origin:500px 0;transform:scaleX(1.0875);">Tarih</div>
<div class="t" style="top:394.25px;font-size:14px;color:#333;left:268.79999999999995px;width:1000px;text-align:center;transform-origin:500px 0;transform:scaleX(1.0157);">Belge No</div>
<div class="t" style="top:394.25px;font-size:14px;color:#333;left:367px;width:1000px;text-align:center;transform-origin:500px 0;transform:scaleX(0.9900);">Açıklama</div>
<div class="t" style="top:394.25px;font-size:14px;color:#333;left:482.5px;width:1000px;text-align:center;transform-origin:500px 0;transform:scaleX(1.1195);">Tutar</div>
<div class="t" style="top:394.25px;font-size:14px;color:#333;left:581.3px;width:1000px;text-align:center;transform-origin:500px 0;transform:scaleX(0.9900);">KDV</div>
<div class="t" style="top:394.25px;font-size:14px;color:#333;left:685px;width:1000px;text-align:center;transform-origin:500px 0;transform:scaleX(1.0857);">Toplam</div>
<div class="t" style="top:394.25px;font-size:14px;color:#333;left:784px;width:1000px;text-align:center;transform-origin:500px 0;transform:scaleX(1.0365);">Kasa Kodu</div>
<div class="t" style="top:385.25px;font-size:14px;color:#333;left:865.5px;width:1000px;text-align:center;transform-origin:500px 0;transform:scaleX(1.0206);">Kredi Kartı</div>
<div class="t" style="top:403.25px;font-size:14px;color:#333;left:865.5px;width:1000px;text-align:center;transform-origin:500px 0;transform:scaleX(1.0328);">Banka</div>
<svg class="a" style="left:303px;top:393px" width="11" height="11" viewBox="0 0 11 11"><g stroke="#9a9a9a" stroke-width="1.6"><path d="M5.5 0.5 V10.5 M0.5 5.5 H10.5 M2 2 L9 9 M9 2 L2 9"/></g></svg>
<svg class="a" style="left:306px;top:474px" width="6" height="10" viewBox="0 0 6 10"><path d="M0 0 L5.5 5 L0 10z" fill="#555"/></svg>
<div class="t" style="top:426.85px;font-size:14.8px;color:#222;left:319.5px;transform-origin:0 0;transform:scaleX(0.8912);">1.</div>
<div class="t" style="top:426.85px;font-size:14.8px;color:#222;left:361px;transform-origin:0 0;transform:scaleX(1.0263);">770 4 11</div>
<div class="t" style="top:426.85px;font-size:14.8px;color:#222;left:461px;transform-origin:0 0;transform:scaleX(1.0092);">Kırtasiye / Matb…</div>
<div class="t" style="top:426.85px;font-size:14.8px;color:#222;left:588px;transform-origin:0 0;transform:scaleX(0.9415);">18</div>
<div class="t" style="top:426.85px;font-size:14.8px;color:#222;left:637px;transform-origin:0 0;transform:scaleX(1.0044);">20.12.2018</div>
<div class="t" style="top:426.85px;font-size:14.8px;color:#222;left:738.5px;transform-origin:0 0;transform:scaleX(1.1238);">25</div>
<div class="t" style="top:426.85px;font-size:14.8px;color:#222;left:806px;transform-origin:0 0;transform:scaleX(0.9971);">BAHRİ KIRTASİ…</div>
<div class="t" style="top:426.85px;font-size:14.8px;color:#222;left:33.0px;width:1000px;text-align:right;transform-origin:1000px 0;transform:scaleX(1.0260);">67,80</div>
<div class="t" style="top:426.85px;font-size:14.8px;color:#222;left:126.5px;width:1000px;text-align:right;transform-origin:1000px 0;transform:scaleX(0.9990);">12,20</div>
<div class="t" style="top:426.85px;font-size:14.8px;color:#222;left:239.5px;width:1000px;text-align:right;transform-origin:1000px 0;transform:scaleX(1.0125);">80,00</div>
<div class="t" style="top:426.85px;font-size:14.8px;color:#222;left:1245px;transform-origin:0 0;transform:scaleX(0.9719);">00</div>
<div class="t" style="top:448.85px;font-size:14.8px;color:#222;left:319.5px;transform-origin:0 0;transform:scaleX(0.8912);">2.</div>
<div class="t" style="top:448.85px;font-size:14.8px;color:#222;left:361px;transform-origin:0 0;transform:scaleX(1.0015);">760 1 05</div>
<div class="t" style="top:448.85px;font-size:14.8px;color:#222;left:461px;transform-origin:0 0;transform:scaleX(1.0369);">Yemek / İaşe G…</div>
<div class="t" style="top:448.85px;font-size:14.8px;color:#222;left:588px;transform-origin:0 0;transform:scaleX(0.9415);">18</div>
<div class="t" style="top:448.85px;font-size:14.8px;color:#222;left:637px;transform-origin:0 0;transform:scaleX(1.0044);">21.12.2018</div>
<div class="t" style="top:448.85px;font-size:14.8px;color:#222;left:738.5px;transform-origin:0 0;transform:scaleX(0.9719);">1</div>
<div class="t" style="top:448.85px;font-size:14.8px;color:#222;left:806px;transform-origin:0 0;transform:scaleX(0.9578);">CİNCİN LOKAN…</div>
<div class="t" style="top:448.85px;font-size:14.8px;color:#222;left:33.0px;width:1000px;text-align:right;transform-origin:1000px 0;transform:scaleX(1.0125);">63,56</div>
<div class="t" style="top:448.85px;font-size:14.8px;color:#222;left:126.5px;width:1000px;text-align:right;transform-origin:1000px 0;transform:scaleX(1.0017);">11,44</div>
<div class="t" style="top:448.85px;font-size:14.8px;color:#222;left:239.5px;width:1000px;text-align:right;transform-origin:1000px 0;transform:scaleX(1.0125);">75,00</div>
<div class="t" style="top:448.85px;font-size:14.8px;color:#222;left:1331px;transform-origin:0 0;transform:scaleX(0.9719);">0000003</div>
<div class="t" style="top:471.85px;font-size:14.8px;color:#222;left:319.5px;transform-origin:0 0;transform:scaleX(0.8912);">3.</div>
<div class="t" style="top:471.85px;font-size:14.8px;color:#222;left:361px;transform-origin:0 0;transform:scaleX(1.0067);">770 3 01</div>
<div class="t" style="top:471.85px;font-size:14.8px;color:#222;left:461px;transform-origin:0 0;transform:scaleX(1.0145);">Benzin / Mazot …</div>
<div class="t" style="top:471.85px;font-size:14.8px;color:#222;left:588px;transform-origin:0 0;transform:scaleX(0.9415);">18</div>
<div class="t" style="top:471.85px;font-size:14.8px;color:#222;left:637px;transform-origin:0 0;transform:scaleX(1.0044);">22.12.2018</div>
<div class="t" style="top:471.85px;font-size:14.8px;color:#222;left:738.5px;transform-origin:0 0;transform:scaleX(1.1238);">34</div>
<div class="t" style="top:471.85px;font-size:14.8px;color:#FFFFFF;left:806px;transform-origin:0 0;transform:scaleX(0.9510);">MAZO AKARYAKIT</div>
<div class="t" style="top:471.85px;font-size:14.8px;color:#222;left:33.0px;width:1000px;text-align:right;transform-origin:1000px 0;transform:scaleX(1.0162);">127,12</div>
<div class="t" style="top:471.85px;font-size:14.8px;color:#222;left:126.5px;width:1000px;text-align:right;transform-origin:1000px 0;transform:scaleX(0.9990);">22,88</div>
<div class="t" style="top:471.85px;font-size:14.8px;color:#222;left:239.5px;width:1000px;text-align:right;transform-origin:1000px 0;transform:scaleX(1.1598);">150,00</div>
<div class="t" style="top:471.85px;font-size:14.8px;color:#222;left:1245px;transform-origin:0 0;transform:scaleX(0.9719);">00</div>
<div class="a" style="left:1002px;top:835px;width:1px;height:102px;background:#D4D4D4"></div>
<div class="a" style="left:1110px;top:846px;width:139px;height:24px;border:1px solid #ABABAB;background:#F0F0F0"></div>
<div class="t" style="top:850.95px;font-size:14.6px;color:#333;left:1004.3px;transform-origin:0 0;transform:scaleX(1.1045);">Tutar :</div>
<div class="t" style="top:850.95px;font-size:14.6px;color:#333;left:247.79999999999995px;width:1000px;text-align:right;transform-origin:1000px 0;transform:scaleX(1.0211);">258,48</div>
<div class="a" style="left:1110px;top:874px;width:139px;height:24px;border:1px solid #ABABAB;background:#F0F0F0"></div>
<div class="t" style="top:878.95px;font-size:14.6px;color:#333;left:1004.3px;transform-origin:0 0;transform:scaleX(1.0907);">K.D.V. :</div>
<div class="t" style="top:878.95px;font-size:14.6px;color:#333;left:247.79999999999995px;width:1000px;text-align:right;transform-origin:1000px 0;transform:scaleX(1.0483);">46,52</div>
<div class="a" style="left:1110px;top:902px;width:139px;height:24px;border:1px solid #ABABAB;background:#F0F0F0"></div>
<div class="t" style="top:906.95px;font-size:14.6px;color:#333;left:1004.3px;transform-origin:0 0;transform:scaleX(1.0211);">Genel Toplam :</div>
<div class="t" style="top:906.95px;font-size:14.6px;color:#333;left:247.79999999999995px;width:1000px;text-align:right;transform-origin:1000px 0;transform:scaleX(1.0211);">305,00</div>
<div class="a" style="left:373px;top:945px;width:1px;height:30px;background:#D8D8D8"></div>
<div class="a" style="left:524px;top:945px;width:1px;height:30px;background:#D8D8D8"></div>
<div class="a" style="left:704px;top:945px;width:1px;height:30px;background:#D8D8D8"></div>
<div class="a" style="left:820px;top:945px;width:1px;height:30px;background:#D8D8D8"></div>
<div class="t" style="top:951.95px;font-size:14.6px;color:#333;left:379.5px;transform-origin:0 0;transform:scaleX(1.0042);">Entegre :</div>
<div class="a" style="left:445px;top:947px;width:72px;height:24px;border:1px solid #ABABAB;background:#fff"></div>
<div class="a" style="left:492px;top:948px;width:24px;height:22px;background:#EDEDED;border-left:1px solid #C6C6C6"></div>
<svg class="a" style="left:498px;top:955px" width="13" height="9" viewBox="0 0 13 9"><path d="M1.5 1.5 L6.5 6.5 L11.5 1.5" stroke="#7A7A7A" stroke-width="2.6" fill="none"/></svg>
<div class="t" style="top:952.95px;font-size:14.6px;color:#222;left:447.5px;transform-origin:0 0;transform:scaleX(1.0098);">Evet</div>
<div class="t" style="top:950.95px;font-size:14.6px;color:#1A1A1A;left:532.5px;transform-origin:0 0;transform:scaleX(1.0041);">Yevmiye Kaydı Göster</div>
<div class="t" style="top:950.95px;font-size:14.6px;color:#1A1A1A;left:711.5px;transform-origin:0 0;transform:scaleX(0.9772);">Kayıt Geçmişi</div>
<div class="t" style="top:950.95px;font-size:14.6px;color:#1A1A1A;left:827.5px;transform-origin:0 0;transform:scaleX(1.0101);">Son Kayıt Eden: Kader IŞIK</div>
<div class="t" style="top:950.95px;font-size:14.6px;color:#1A1A1A;left:1269px;transform-origin:0 0;transform:scaleX(1.1039);">ID: 93</div>
<div class="a" style="left:0px;top:1005px;width:1439px;height:37px;background:#E8A33C"></div>
<div class="a" style="left:0px;top:1005px;width:1439px;height:1px;background:#D9A055"></div>
<div class="a" style="left:0px;top:1040px;width:1439px;height:1px;background:#E6B06A"></div>
<div class="a" style="left:0px;top:1041px;width:1439px;height:1px;background:#2A1606"></div>
<div class="t" style="top:1016.95px;font-size:14.6px;color:#FFF6DA;left:2px;transform-origin:0 0;transform:scaleX(0.9174);">USD:</div>
<div class="t" style="top:1016.95px;font-size:14.6px;color:#FFF6DA;left:48.6px;transform-origin:0 0;transform:scaleX(0.9856);">Alış: 5,4242</div>
<div class="t" style="top:1016.95px;font-size:14.6px;color:#FFF6DA;left:139px;transform-origin:0 0;transform:scaleX(0.9821);">Satış: 5,4340</div>
<div class="t" style="top:1016.95px;font-size:14.6px;color:#FFF6DA;left:287.5px;transform-origin:0 0;transform:scaleX(1.0240);">Son İşlem (Düzenle) : 00:00 625 ms</div>
</body></html>
